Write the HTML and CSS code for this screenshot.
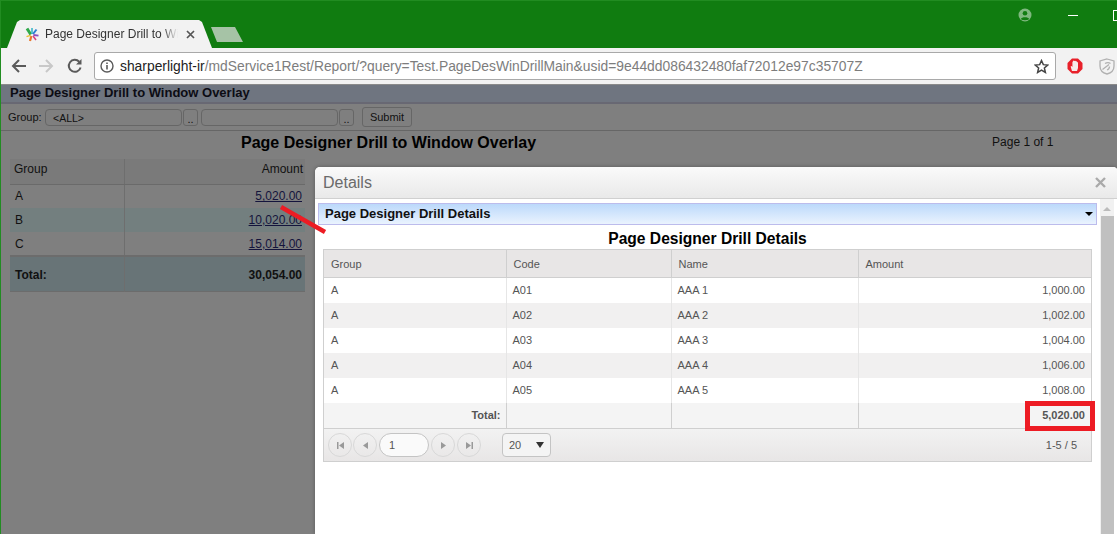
FILE: index.html
```html
<!doctype html>
<html lang="en">
  <head>
    <meta charset="UTF-8" />
    <meta name="viewport" content="width=device-width, initial-scale=1.0"/>
    <title>Page Designer Drill to Window Overlay</title>
    <link rel="stylesheet" href="styles.css">
  </head>
  <body>
    <div class="browser">
      <div class="tabstrip">
        <div class="tab">
          <svg class="favicon" width="14" height="15" viewBox="0 0 14 15">
            <path d="M5.8 7.5 L2 1.5" stroke="#2fa84a" stroke-width="3"/>
            <path d="M7 7 L7 1" stroke="#2fb3c4" stroke-width="1.5"/>
            <path d="M8 7 L11.5 2.5" stroke="#2b7fd0" stroke-width="2"/>
            <path d="M8.4 8 L13.5 8.6" stroke="#8a4fc0" stroke-width="1.8"/>
            <path d="M8 9 L11 13" stroke="#d9417e" stroke-width="1.6"/>
            <path d="M6.4 9 L5 14" stroke="#e8782e" stroke-width="2.2"/>
            <path d="M5.6 8.4 L1.5 9.6" stroke="#e9c02f" stroke-width="1.5"/>
          </svg>
          <span class="tab-title">Page Designer Drill to Wi</span>
          <svg class="tab-close" width="9" height="9" viewBox="0 0 9 9"><path d="M1 1 L8 8 M8 1 L1 8" stroke="#555" stroke-width="1.7"/></svg>
        </div>
        <div class="new-tab"></div>
        <div class="window-controls">
          <svg class="profile" width="14" height="14" viewBox="0 0 14 14">
            <circle cx="7" cy="7" r="6.5" fill="#7fb87f"/>
            <circle cx="7" cy="5.2" r="2.3" fill="#107c10"/>
            <path d="M2.8 11 C3.6 8.6 10.4 8.6 11.2 11 C9.5 12.6 4.5 12.6 2.8 11 Z" fill="#107c10"/>
          </svg>
          <span class="minimize"></span>
          <span class="maximize"></span>
        </div>
      </div>
      <div class="toolbar">
        <svg class="nav-icon" width="16" height="16" viewBox="0 0 16 16"><path d="M15 8 H2 M8 2 L2 8 L8 14" fill="none" stroke="#5a5a5a" stroke-width="2"/></svg>
        <svg class="nav-icon forward" width="16" height="16" viewBox="0 0 16 16"><path d="M1 8 H14 M8 2 L14 8 L8 14" fill="none" stroke="#c8c8c8" stroke-width="2"/></svg>
        <svg class="nav-icon" width="16" height="16" viewBox="0 0 16 16"><path d="M13.6 9.5 A6 6 0 1 1 12.2 3.7" fill="none" stroke="#5a5a5a" stroke-width="2"/><path d="M14.5 1 V6.5 H9 Z" fill="#5a5a5a"/></svg>
        <div class="omnibox">
          <svg class="info" width="14" height="14" viewBox="0 0 14 14"><circle cx="7" cy="7" r="6" fill="none" stroke="#5a5a5a" stroke-width="1.4"/><path d="M7 6 V10.5 M7 3.4 V5" stroke="#5a5a5a" stroke-width="1.6"/></svg>
          <span class="url"><span class="host">sharperlight-ir</span>/mdService1Rest/Report/?query=Test.PageDesWinDrillMain&amp;usid=9e44dd086432480faf72012e97c35707Z</span>
          <svg class="star" width="15" height="15" viewBox="0 0 24 24"><path d="M12 2.5 L14.9 9 L22 9.7 L16.6 14.4 L18.2 21.4 L12 17.7 L5.8 21.4 L7.4 14.4 L2 9.7 L9.1 9 Z" fill="none" stroke="#444" stroke-width="2.4"/></svg>
        </div>
        <svg class="ext-stop" width="16" height="16" viewBox="0 0 16 16">
          <path d="M5 0.5 H11 L15.5 5 V11 L11 15.5 H5 L0.5 11 V5 Z" fill="#e8202a"/>
          <path d="M5 13 L3.6 8.6 L4.6 8 L5.4 9 V4.4 Q5.4 3.6 6 3.6 V3 Q6.8 2.2 7.4 3 Q8.4 2.4 9 3.2 Q10 3 10.2 4 Q11 4 11 5 V10 L10 13 Z" fill="#f5ecea"/>
        </svg>
        <svg class="ext-shield" width="16" height="17" viewBox="0 0 16 17">
          <path d="M8 1 L15 3 V8 C15 12 12 15 8 16 C4 15 1 12 1 8 V3 Z" fill="none" stroke="#b0b0b0" stroke-width="1.3"/>
          <path d="M3.5 11.5 L10 6.5 M6 5.5 Q9 3.6 11.5 5.5 M10.5 8.5 Q10.5 11 8 12" fill="none" stroke="#b0b0b0" stroke-width="1.3"/>
        </svg>
      </div>
    </div>

    <div class="page">
      <div class="page-title">Page Designer Drill to Window Overlay</div>
      <div class="filter-row">
        <label class="filter-label">Group:</label>
        <div class="filter-input">&lt;ALL&gt;</div>
        <div class="filter-btn">..</div>
        <div class="filter-input second"></div>
        <div class="filter-btn">..</div>
        <div class="submit">Submit</div>
      </div>
      <div class="report-head">
        <h1>Page Designer Drill to Window Overlay</h1>
        <span class="page-count">Page 1 of 1</span>
      </div>
      <table class="report">
        <thead>
          <tr><th class="col-group">Group</th><th class="num">Amount</th></tr>
        </thead>
        <tbody>
          <tr><td>A</td><td class="num"><a>5,020.00</a></td></tr>
          <tr class="alt"><td>B</td><td class="num"><a>10,020.00</a></td></tr>
          <tr><td>C</td><td class="num"><a>15,014.00</a></td></tr>
          <tr class="total"><td>Total:</td><td class="num">30,054.00</td></tr>
        </tbody>
      </table>
    </div>

    <svg class="arrow" width="52" height="32" viewBox="0 0 52 32"><path d="M3 2 L47 27" stroke="#ed1c24" stroke-width="4.4"/></svg>

    <div class="dialog">
      <div class="dialog-head">
        <span class="dialog-title">Details</span>
        <svg class="dialog-close" width="11" height="11" viewBox="0 0 11 11"><path d="M1 1 L10 10 M10 1 L1 10" stroke="#aaa" stroke-width="2.4"/></svg>
      </div>
      <div class="dialog-body">
        <div class="dialog-main">
          <div class="picker">
            <span>Page Designer Drill Details</span>
            <span class="picker-caret"></span>
          </div>
          <h2>Page Designer Drill Details</h2>
          <div class="grid-wrap">
            <table class="grid">
              <thead>
                <tr><th class="c1">Group</th><th class="c2">Code</th><th class="c3">Name</th><th>Amount</th></tr>
              </thead>
              <tbody>
                <tr><td>A</td><td>A01</td><td>AAA 1</td><td class="num">1,000.00</td></tr>
                <tr class="alt"><td>A</td><td>A02</td><td>AAA 2</td><td class="num">1,002.00</td></tr>
                <tr><td>A</td><td>A03</td><td>AAA 3</td><td class="num">1,004.00</td></tr>
                <tr class="alt"><td>A</td><td>A04</td><td>AAA 4</td><td class="num">1,006.00</td></tr>
                <tr><td>A</td><td>A05</td><td>AAA 5</td><td class="num">1,008.00</td></tr>
                <tr class="grid-total"><td class="num">Total:</td><td></td><td></td><td class="num"><span class="hilite">5,020.00</span></td></tr>
              </tbody>
            </table>
            <div class="pager">
              <span class="pg-btn"><svg width="9" height="9" viewBox="0 0 9 9"><path d="M1 1 H2.5 V8 H1 Z M8 1 V8 L3 4.5 Z" fill="#999"/></svg></span>
              <span class="pg-btn"><svg width="9" height="9" viewBox="0 0 9 9"><path d="M7 1 V8 L2 4.5 Z" fill="#999"/></svg></span>
              <span class="pg-input">1</span>
              <span class="pg-btn"><svg width="9" height="9" viewBox="0 0 9 9"><path d="M2 1 V8 L7 4.5 Z" fill="#999"/></svg></span>
              <span class="pg-btn"><svg width="9" height="9" viewBox="0 0 9 9"><path d="M1 1 V8 L6 4.5 Z M6.5 1 H8 V8 H6.5 Z" fill="#999"/></svg></span>
              <span class="pg-size">20<span class="pg-caret"></span></span>
              <span class="pg-info">1-5 / 5</span>
            </div>
          </div>
        </div>
        <div class="scrollbar">
          <span class="scroll-up"></span>
          <span class="scroll-thumb"></span>
        </div>
      </div>
    </div>
  </body>
</html>
```

FILE: styles.css
```css
html, body {
  margin: 0;
  height: 534px;
  overflow: hidden;
}
body {
  font-family: "Liberation Sans", Arial, sans-serif;
  background-color: #7f7f7f;
  border-left: 1px solid #218c21;
  box-sizing: border-box;
  position: relative;
}

/* browser chrome */
.tabstrip {
  height: 48px;
  background-color: #107c10;
  border-top: 1px solid #218c21;
  box-sizing: border-box;
  display: flex;
  align-items: flex-end;
  padding-left: 6px;
}
.tab {
  width: 205px;
  height: 28px;
  background-color: #f2f2f2;
  clip-path: polygon(0 100%, 10px 2px, 13px 0, 192px 0, 195px 2px, 205px 100%);
  display: flex;
  align-items: center;
  box-sizing: border-box;
  padding-left: 18px;
  flex-shrink: 0;
}
.favicon {
  flex-shrink: 0;
}
.tab-title {
  font-size: 12px;
  color: #333;
  margin-left: 6px;
  width: 133px;
  white-space: nowrap;
  overflow: hidden;
  -webkit-mask-image: linear-gradient(to right, #000 88%, transparent);
  mask-image: linear-gradient(to right, #000 88%, transparent);
}
.tab-close {
  margin-left: 8px;
}
.new-tab {
  width: 32px;
  height: 15px;
  margin: 0 0 6px -1px;
  background-color: #a6c3a6;
  clip-path: polygon(0 0, 24px 0, 32px 100%, 6px 100%);
}
.window-controls {
  align-self: flex-start;
  margin-left: auto;
  display: flex;
  align-items: center;
  padding-top: 7px;
}
.profile {
  margin-right: 36px;
}
.minimize {
  width: 10px;
  height: 1px;
  background-color: #fff;
  margin-right: 35px;
}
.maximize {
  width: 9px;
  height: 9px;
  border: 1px solid #fff;
  margin-right: -7px;
}
.toolbar {
  height: 36px;
  background-color: #f2f2f2;
  display: flex;
  align-items: center;
  padding-left: 10px;
  box-sizing: border-box;
}
.nav-icon {
  margin-right: 11px;
}
.nav-icon.forward {
  margin-right: 13px;
}
.omnibox {
  width: 962px;
  height: 28px;
  background-color: #fff;
  border: 1px solid #a9a9a9;
  border-radius: 3px;
  box-sizing: border-box;
  display: flex;
  align-items: center;
  padding-left: 5px;
  flex-shrink: 0;
}
.info {
  flex-shrink: 0;
}
.url {
  font-size: 13.85px;
  color: #7d7d7d;
  margin-left: 6px;
  white-space: nowrap;
}
.host {
  color: #222;
}
.star {
  margin-left: auto;
  margin-right: 6px;
}
.ext-stop {
  margin-left: 11px;
  flex-shrink: 0;
}
.ext-shield {
  margin-left: 16px;
  flex-shrink: 0;
}

/* report behind the overlay */
.page {
  height: 450px;
}
.page-title {
  height: 20px;
  line-height: 15px;
  padding-left: 9px;
  font-size: 13px;
  font-weight: bold;
  color: #0c0c14;
  background-color: #6f7580;
  border-top: 1px solid #8a8a8a;
  border-bottom: 2px solid #686873;
  box-sizing: border-box;
}
.filter-row {
  height: 27px;
  display: flex;
  align-items: center;
  border-bottom: 1px solid #666;
  box-sizing: border-box;
  padding-left: 7px;
  font-size: 11px;
  color: #111;
}
.filter-label {
  width: 37px;
}
.filter-input {
  width: 137px;
  height: 17px;
  border: 1px solid #666;
  border-radius: 4px;
  box-sizing: border-box;
  padding-left: 7px;
  line-height: 16px;
  font-size: 10.5px;
}
.filter-input.second {
  margin-left: 3px;
}
.filter-btn {
  width: 15px;
  height: 17px;
  margin-left: 1px;
  border: 1px solid #666;
  border-radius: 3px;
  box-sizing: border-box;
  text-align: center;
  line-height: 18px;
}
.submit {
  width: 50px;
  height: 20px;
  margin-left: 8px;
  border: 1px solid #666;
  border-radius: 3px;
  box-sizing: border-box;
  text-align: center;
  line-height: 18px;
  font-size: 11px;
}
.report-head {
  height: 23px;
  display: flex;
  align-items: center;
  padding-left: 240px;
}
.report-head h1 {
  margin: 0;
  font-size: 16px;
  font-weight: bold;
  color: #000;
}
.page-count {
  margin: 0 0 2px 456px;
  font-size: 12px;
  color: #111;
}
.report {
  border-collapse: collapse;
  margin: 5px 0 0 9px;
  width: 295px;
  font-size: 12px;
  color: #111;
  table-layout: fixed;
}
.report th {
  height: 25px;
  font-weight: normal;
  text-align: left;
  padding: 0 2px 5px 4px;
  box-sizing: border-box;
  background-color: #7a7a7a;
  border-bottom: 1px solid #6a6a6a;
}
.report .col-group {
  width: 114px;
  border-right: 1px solid #6e6e6e;
}
.report td {
  height: 24px;
  padding: 0 3px 0 5px;
  box-sizing: border-box;
}
.report td:first-child {
  border-right: 1px solid #6e6e6e;
}
.report .num {
  text-align: right;
}
.report a {
  text-decoration: underline;
  color: #14143c;
}
.report .alt {
  background-color: #737f7f;
}
.report .total {
  font-weight: bold;
  background-color: #687477;
  border-top: 2px solid #6c6c6c;
  border-bottom: 1px solid #6c6c6c;
}
.report .total td {
  height: 35px;
  padding-top: 2px;
}

/* red annotation line */
.arrow {
  position: absolute;
  left: 277px;
  top: 205px;
  z-index: 2;
}

/* details window */
.dialog {
  position: absolute;
  left: 314px;
  top: 167px;
  width: 803px;
  height: 367px;
  background-color: #fff;
  border-top-left-radius: 5px;
  border-top-right-radius: 5px;
  box-shadow: 0 0 4px rgba(0, 0, 0, 0.3);
  display: flex;
  flex-direction: column;
  z-index: 1;
}
.dialog-head {
  height: 32px;
  flex-shrink: 0;
  background: linear-gradient(#fafafa, #e9e9e9);
  border-bottom: 1px solid #d0d0d0;
  box-sizing: border-box;
  display: flex;
  align-items: center;
  justify-content: space-between;
  padding: 0 12px 0 8px;
  border-top-left-radius: 5px;
  border-top-right-radius: 5px;
}
.dialog-title {
  font-size: 16px;
  color: #6a6a6a;
}
.dialog-body {
  flex: 1;
  display: flex;
  overflow: hidden;
}
.dialog-main {
  width: 785px;
  padding: 4px 0 0 3px;
  box-sizing: border-box;
}
.picker {
  width: 779px;
  height: 22px;
  border: 1px solid #bcbcec;
  background: linear-gradient(#bcd9fb, #eaf3fe);
  box-sizing: border-box;
  display: flex;
  align-items: center;
  justify-content: space-between;
  padding: 0 3px 2px 6px;
  font-size: 13px;
  font-weight: bold;
  color: #111;
}
.picker-caret {
  border-left: 4px solid transparent;
  border-right: 4px solid transparent;
  border-top: 4px solid #000;
  margin-top: 2px;
}
.dialog-main h2 {
  margin: 0;
  height: 24px;
  line-height: 28px;
  font-size: 15.6px;
  font-weight: bold;
  color: #000;
  text-align: center;
  width: 779px;
}
.grid-wrap {
  margin-left: 5px;
  width: 769px;
  border: 1px solid #cfcfcf;
  border-top: 0;
  box-sizing: border-box;
}
.grid {
  border-collapse: collapse;
  width: 100%;
  table-layout: fixed;
  font-size: 11px;
  color: #555;
}
.grid th {
  height: 28px;
  font-weight: normal;
  text-align: left;
  padding: 0 5px 0 7px;
  box-sizing: border-box;
  color: #555;
  background-color: #e8e6e6;
  border: 1px solid #cfcfcf;
  border-left: 0;
}
.grid th:last-child {
  border-right: 0;
}
.grid .c1 { width: 182px; }
.grid .c2 { width: 165px; }
.grid .c3 { width: 187px; }
.grid td {
  height: 25px;
  padding: 0 6px 0 6px;
  border-left: 1px solid #cfcfcf;
  box-sizing: border-box;
}
.grid td:first-child {
  border-left: 0;
  padding: 0 5px 0 7px;
}
.grid tbody tr:not(.grid-total) td {
  border-left-color: #e6e6e6;
}
.grid .alt {
  background-color: #f1f0f0;
}
.grid .num {
  text-align: right;
}
.grid-total {
  background-color: #f4f4f4;
  font-weight: bold;
  border-bottom: 1px solid #cfcfcf;
}
.grid-total td {
  height: 26px;
}
.hilite {
  position: relative;
}
.hilite::after {
  content: "";
  position: absolute;
  left: -17px;
  right: -10px;
  top: -8px;
  bottom: -10px;
  border: 5px solid #ed1c24;
}
.pager {
  height: 32px;
  background: linear-gradient(#f2f2f2, #e8e6e6);
  display: flex;
  align-items: center;
  padding: 0 14px 0 4px;
  box-sizing: border-box;
  font-size: 11px;
  color: #555;
}
.pg-btn {
  width: 24px;
  height: 24px;
  border: 1px solid #d8d8d8;
  border-radius: 50%;
  box-sizing: border-box;
  display: flex;
  align-items: center;
  justify-content: center;
  margin-right: 2px;
}
.pg-btn:first-child {
  margin-right: 1px;
}
.pg-input {
  width: 50px;
  height: 24px;
  border: 1px solid #c4c4c4;
  border-radius: 12px;
  box-sizing: border-box;
  background-color: #fafafa;
  line-height: 22px;
  padding-left: 9px;
  margin-right: 2px;
}
.pg-size {
  width: 49px;
  height: 24px;
  margin-left: 19px;
  border: 1px solid #c4c4c4;
  border-radius: 4px;
  box-sizing: border-box;
  display: flex;
  align-items: center;
  justify-content: space-between;
  padding: 0 6px;
  font-size: 11px;
  background-color: #f4f4f4;
}
.pg-caret {
  border-left: 4px solid transparent;
  border-right: 4px solid transparent;
  border-top: 6px solid #333;
}
.pg-info {
  margin-left: auto;
}
.scrollbar {
  width: 14px;
  display: flex;
  flex-direction: column;
  align-items: center;
  background-color: #f1f1f1;
}
.scroll-up {
  margin-top: 8px;
  border-left: 4px solid transparent;
  border-right: 4px solid transparent;
  border-bottom: 4px solid #bbb;
}
.scroll-thumb {
  margin: 5px 0 0 1px;
  flex: 1;
  width: 13px;
  background-color: #c0c0c0;
}
```
